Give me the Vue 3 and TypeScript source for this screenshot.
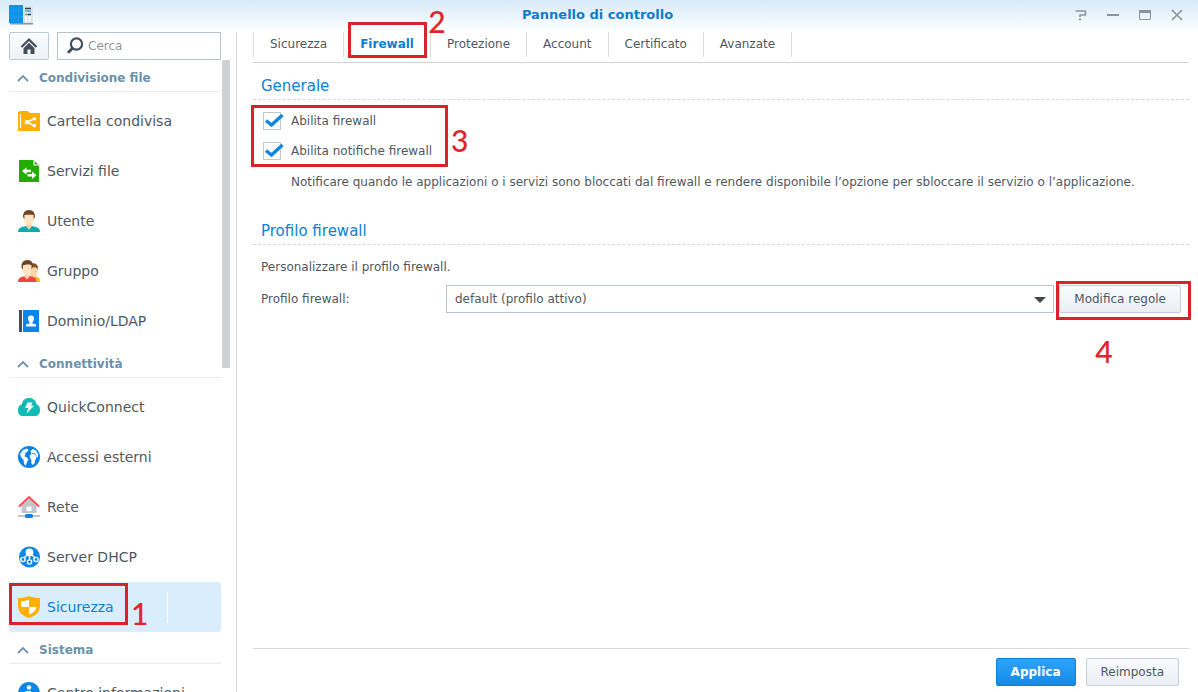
<script setup lang="ts">
import { ref } from 'vue'

interface Entry {
  id: string
  label: string
}
interface Group {
  title: string
  entries: Entry[]
}

const groups: Group[] = [
  {
    title: 'Condivisione file',
    entries: [
      { id: 'folder', label: 'Cartella condivisa' },
      { id: 'files', label: 'Servizi file' },
      { id: 'user', label: 'Utente' },
      { id: 'group', label: 'Gruppo' },
      { id: 'ldap', label: 'Dominio/LDAP' },
    ],
  },
  {
    title: 'Connettività',
    entries: [
      { id: 'quick', label: 'QuickConnect' },
      { id: 'globe', label: 'Accessi esterni' },
      { id: 'network', label: 'Rete' },
      { id: 'dhcp', label: 'Server DHCP' },
      { id: 'security', label: 'Sicurezza' },
    ],
  },
  {
    title: 'Sistema',
    entries: [{ id: 'info', label: 'Centro informazioni' }],
  },
]

const tabs: string[] = ['Sicurezza', 'Firewall', 'Protezione', 'Account', 'Certificato', 'Avanzate']

const activeEntry = ref('security')
const activeTab = ref('Firewall')
const search = ref('')
const firewallOn = ref(true)
const notifyOn = ref(true)
const profile = ref('default')
</script>

<template>
  <div class="window">
    <header class="titlebar">
      <svg class="app-icon" width="24" height="20" viewBox="0 0 24 20" aria-hidden="true">
        <path d="M1 18h23v1.500H1z" fill="#8b949b" />
        <path d="M13 1h11v17H13z" fill="#dce3e8" />
        <path d="M0 0h14v18H0z" fill="#0a93ea" />
        <path d="M4.500 0v18M9.500 0v18M0 6h14M0 12h14" stroke="#1a9bee" stroke-width="1" />
        <path d="M16 3.500h6M19 9.500h3" stroke="#38444e" stroke-width="1.500" />
        <path d="M19 6h3" stroke="#38a7e4" stroke-width="1.500" />
        <path d="M16 9.500h3M16 6h3" stroke="#5fb94a" stroke-width="1.500" />
        <path d="M16 12.500h2M19 12.500h3M16 15.500h2M19 15.500h3" stroke="#fff" stroke-width="2" />
      </svg>
      <h1>Pannello di controllo</h1>
      <div class="window-buttons">
        <button type="button" aria-label="Guida">
          <svg width="14" height="14" viewBox="0 0 14 14"><path d="M1.500 3H11.500V7H6V9" fill="none" stroke="#8895a1" stroke-width="1.600" stroke-linejoin="round" /><path d="M5 10.500h2v1.700H5z" fill="#8895a1" /></svg>
        </button>
        <button type="button" aria-label="Riduci a icona">
          <svg width="14" height="14" viewBox="0 0 14 14"><path d="M1 7h12" stroke="#8895a1" stroke-width="2" /></svg>
        </button>
        <button type="button" aria-label="Ingrandisci">
          <svg width="14" height="14" viewBox="0 0 14 14"><path d="M1.500 2.500h11v9h-11z" fill="none" stroke="#8895a1" /><path d="M1 2h12v3H1z" fill="#8895a1" /></svg>
        </button>
        <button type="button" aria-label="Chiudi">
          <svg width="14" height="14" viewBox="0 0 14 14"><path d="M2 2l10 10M12 2L2 12" stroke="#8895a1" stroke-width="1.700" /></svg>
        </button>
      </div>
    </header>

    <div class="body">
      <aside class="sidebar">
        <div class="tools">
          <button type="button" class="home" aria-label="Home">
            <svg width="18" height="18" viewBox="0 0 18 18">
              <path d="M1.500 10L9 2.500L16.500 10" fill="none" stroke="#454f59" stroke-width="2.200" />
              <path d="M9 5.800L14.500 11.200V17H10.500V12.500H7.500V17H3.500V11.200z" fill="#454f59" />
            </svg>
          </button>
          <div class="search">
            <svg width="18" height="18" viewBox="0 0 18 18" aria-hidden="true">
              <circle cx="10.500" cy="7" r="5.600" fill="none" stroke="#454f59" stroke-width="2.200" />
              <path d="M6.500 11.200L2 15.700" stroke="#454f59" stroke-width="3" />
            </svg>
            <input v-model="search" type="text" placeholder="Cerca" aria-label="Cerca" />
          </div>
        </div>

        <nav class="list">
          <section v-for="group in groups" :key="group.title">
            <h2>
              <svg width="12" height="8" viewBox="0 0 12 8" aria-hidden="true"><path d="M1 7l5-5 5 5" fill="none" stroke="#7394ab" stroke-width="1.800" /></svg>
              {{ group.title }}
            </h2>
            <ul>
              <li v-for="entry in group.entries" :key="entry.id">
                <a href="#" :class="{ active: entry.id === activeEntry }" @click.prevent="activeEntry = entry.id">
                  <svg class="icon" width="22" height="22" viewBox="0 0 22 22" aria-hidden="true">
                    <g v-if="entry.id === 'folder'">
                      <path d="M1 1h9l2 2h10v18H0V2h1z" fill="#ffb000" />
                      <path d="M2.500 4v14" stroke="#fff" stroke-width="1.200" />
                      <path d="M16.500 8.500L9 12.300l7.500 3.500" fill="none" stroke="#fff" stroke-width="1.500" />
                      <circle cx="9" cy="12.300" r="2.300" fill="#fff" />
                      <circle cx="16.500" cy="8.700" r="1.700" fill="#fff" />
                      <circle cx="16.500" cy="15.700" r="1.700" fill="#fff" />
                    </g>
                    <g v-else-if="entry.id === 'files'">
                      <path d="M1 0h14l6 5.500V22H1z" fill="#21ac00" />
                      <path d="M15.500 0v5.500H21z" fill="#fff" />
                      <path d="M16.700 1.200L20 4.400h-3.300z" fill="#21ac00" />
                      <path d="M4 11l4.500-3.800v2.600H13v2.400H8.500v2.600z" fill="#fff" />
                      <path d="M18.500 15.200L14 19v-2.600H9.500V14H14v-2.600z" fill="#fff" />
                    </g>
                    <g v-else-if="entry.id === 'user'">
                      <path d="M0 22c0-4 3-5 8-6h6c5 1 8 2 8 6z" fill="#0dabb0" />
                      <path d="M8.500 12h5v4.500L11 20l-2.500-3.500z" fill="#f8cfa6" />
                      <path d="M6 5h10v3c0 4-2 7-5 7s-5-3-5-7z" fill="#ffe3c3" />
                      <path d="M5.200 7.500C4.500 3 7 0 11 0s6.500 3 5.800 7.500L15.600 9V5C12 4.500 10 4.500 6.400 5v4z" fill="#714322" />
                    </g>
                    <g v-else-if="entry.id === 'group'">
                      <path d="M13 22c0-4 1-6 4-6 4 1 5 2.500 5 6z" fill="#f7bd20" />
                      <path d="M12 7h7.500v4c0 3-1.500 6-4 6H12z" fill="#ffd5a8" />
                      <path d="M12 4c4-2 8 0 8 3.500L19 11V8c-2-1-4-1-7-1z" fill="#8a512b" />
                      <path d="M0 22c0-4 2.500-5 7-6h5c4 1 6.500 2 6.500 6z" fill="#ef4348" />
                      <path d="M6.500 12h5v5L9 19.500 6.500 17z" fill="#f8cfa6" />
                      <path d="M4.500 5h9.500v4c0 4-2 6.500-4.700 6.500S4.500 13 4.500 9z" fill="#ffe3c3" />
                      <path d="M3.800 8C2.500 3 5.500 0 9.500 0s6.500 3 5 8l-1 1.500V5C10 4.300 8.500 4.500 5 5.300v4.200z" fill="#714322" />
                    </g>
                    <g v-else-if="entry.id === 'ldap'">
                      <path d="M1 0h3v22H1z" fill="#3d5064" />
                      <path d="M5 0h16v22H5z" fill="#0b86e8" />
                      <path d="M13 5.500c2 0 3 1.200 3 3 0 1.500-.6 2.700-1.500 3.500v1.500l3.500 1V16.500H8v-2l3.500-1V12c-.9-.8-1.500-2-1.500-3.500 0-1.800 1-3 3-3z" fill="#fff" />
                    </g>
                    <g v-else-if="entry.id === 'quick'">
                      <path d="M4 8.500C4 4.500 7 2 11 2c4 0 7 2.200 7 6C20.500 8.500 22 11 22 14c0 4-2 6-5 6H5c-3 0-5-2-5-5.500 0-3.500 1.500-6 4-6z" fill="#0fbcb6" />
                      <path d="M4.500 8.500c3-.8 4.500.5 5.500 2M18 8l-2 1" fill="none" stroke="#08a7a2" />
                      <path d="M9.500 6.500h5L13 9.800h3L8.700 17.500l1.500-5.500H7z" fill="#fff" />
                    </g>
                    <g v-else-if="entry.id === 'globe'">
                      <circle cx="11" cy="11" r="11" fill="#0b83e6" />
                      <path d="M2 8L5 4l4-1.500L10.500 4 9 6 7 7l.5 2L6 10l3 1.500 1.500 2L9 16l-1.500 4L6 17.500 5.500 14 3 11z" fill="#fff" />
                      <path d="M12.500 5L15 3l3 1.500L20 8v4l-1.500-2-.5 3-1 1.500-.5 3L14.500 19l-1.200-2v-3.500L12 12l-.3-2.500L13.500 8z" fill="#fff" />
                      <path d="M14 7.500l3 .3.800 1.700" fill="none" stroke="#0b83e6" stroke-width=".8" />
                    </g>
                    <g v-else-if="entry.id === 'network'">
                      <path d="M3.500 10L11 3l7.500 7v7h-15z" fill="#c0c6cb" />
                      <path d="M8.500 10.500h5V15h-5z" fill="#fff" />
                      <path d="M1 10.500L11 1.200l10 9.300" fill="none" stroke="#f05457" stroke-width="2.200" />
                      <path d="M0 20h22" stroke="#a9b0b6" stroke-width="1.500" />
                      <rect x="7" y="18" width="8" height="4" rx="1.500" fill="#0b83e6" />
                    </g>
                    <g v-else-if="entry.id === 'dhcp'">
                      <circle cx="11.500" cy="11" r="10.500" fill="#0b87e8" />
                      <path d="M11.500 6v9M9 9l-4 4M14 9l4 4" stroke="#fff" stroke-width="1.300" />
                      <circle cx="11.500" cy="6.500" r="3.900" fill="#fff" />
                      <g fill="#0b87e8" stroke="#fff" stroke-width="1.400">
                        <circle cx="5" cy="13.500" r="2.100" />
                        <circle cx="11.500" cy="16" r="2.100" />
                        <circle cx="18" cy="13.500" r="2.100" />
                      </g>
                    </g>
                    <g v-else-if="entry.id === 'security'">
                      <path d="M0 2C4 2 8 1.500 11 0c3 1.500 7 2 11 2v7c0 7-4 11-11 13C4 20 0 16 0 9z" fill="#ffb000" />
                      <path d="M11 3.500V11H3.500C3 9 3 7 3.200 5.200 6 5 9 4.500 11 3.500zM11 11h7.500c-1 4-3.500 6.200-7.500 7.500z" fill="#fff" />
                    </g>
                    <g v-else>
                      <circle cx="11" cy="11" r="11" fill="#0b87e8" />
                      <circle cx="11" cy="5.500" r="2.200" fill="#fff" />
                      <path d="M7.500 9H13v8h2v2H7.500v-2h2v-6h-2z" fill="#fff" />
                    </g>
                  </svg>
                  <span>{{ entry.label }}</span>
                  <i v-if="entry.id === 'security'" class="seam"></i>
                  <span v-if="entry.id === 'security'" class="mark mark-1"><b>1</b></span>
                </a>
              </li>
            </ul>
          </section>
        </nav>
        <div class="scrollbar"></div>
      </aside>

      <main class="content">
        <nav class="tabs">
          <div v-for="tab in tabs" :key="tab" class="tab">
            <button type="button" :class="{ current: tab === activeTab }" @click="activeTab = tab">{{ tab }}</button>
            <span v-if="tab === 'Firewall'" class="mark mark-2"><b>2</b></span>
          </div>
        </nav>

        <form class="panel" @submit.prevent>
          <h3>Generale</h3>
          <div class="checks">
            <label class="check">
              <span class="box">
                <input v-model="firewallOn" type="checkbox" />
                <svg v-if="firewallOn" width="20" height="16" viewBox="0 0 20 16" aria-hidden="true"><path d="M2 7.500l5.500 4.500L18.500 2" fill="none" stroke="#0f86e4" stroke-width="3.400" /></svg>
              </span>
              Abilita firewall
            </label>
            <label class="check">
              <span class="box">
                <input v-model="notifyOn" type="checkbox" />
                <svg v-if="notifyOn" width="20" height="16" viewBox="0 0 20 16" aria-hidden="true"><path d="M2 7.500l5.500 4.500L18.500 2" fill="none" stroke="#0f86e4" stroke-width="3.400" /></svg>
              </span>
              Abilita notifiche firewall
            </label>
            <span class="mark mark-3"><b>3</b></span>
          </div>
          <p class="hint">Notificare quando le applicazioni o i servizi sono bloccati dal firewall e rendere disponibile l’opzione per sbloccare il servizio o l’applicazione.</p>

          <h3>Profilo firewall</h3>
          <p class="intro">Personalizzare il profilo firewall.</p>
          <div class="field">
            <label for="profile">Profilo firewall:</label>
            <div class="select">
              <select id="profile" v-model="profile">
                <option value="default">default (profilo attivo)</option>
              </select>
              <svg width="12" height="6" viewBox="0 0 12 6" aria-hidden="true"><path d="M0 0h12L6 6z" fill="#3f474f" /></svg>
            </div>
            <div class="rules">
              <button type="button" class="btn">Modifica regole</button>
              <span class="mark mark-4"><b>4</b></span>
            </div>
          </div>
        </form>

        <footer class="footer">
          <button type="button" class="btn primary">Applica</button>
          <button type="button" class="btn">Reimposta</button>
        </footer>
      </main>
    </div>
  </div>
</template>

<style>
body {
  margin: 0;
  overflow: hidden;
}
</style>

<style scoped>
.window {
  display: flex;
  flex-direction: column;
  height: 100vh;
  overflow: hidden;
  background: linear-gradient(#d7eaf8, #fff 32px);
  color: #50585f;
  font: 12px/18px Verdana, "DejaVu Sans", sans-serif;
}
.window * {
  box-sizing: border-box;
}
button,
input,
select {
  color: inherit;
  font: inherit;
}
h1,
h2,
h3,
p,
ul {
  margin: 0;
  padding: 0;
  list-style: none;
}
.titlebar {
  display: grid;
  grid-template-columns: 1fr auto 1fr;
  align-items: center;
  flex: none;
  height: 32px;
  padding: 0 12px 2px 9px;
}
h1 {
  color: #0c7dcb;
  font-size: 13px;
}
.window-buttons {
  display: flex;
  justify-content: flex-end;
  gap: 14px;
}
.window-buttons button {
  width: 18px;
  height: 18px;
  padding: 2px;
  border: 0;
  background: none;
}
.window-buttons svg {
  display: block;
}
.body {
  display: flex;
  flex: 1;
  min-height: 0;
}
.sidebar {
  position: relative;
  display: flex;
  flex: none;
  flex-direction: column;
  width: 237px;
  padding: 0 15px 0 9px;
  border-right: 1px solid #d3d7da;
}
.tools {
  display: flex;
  flex: none;
  gap: 8px;
  width: 212px;
}
.home {
  display: flex;
  flex: none;
  align-items: center;
  justify-content: center;
  width: 40px;
  height: 28px;
  padding: 0;
  border: 1px solid #bec8d2;
  border-radius: 2px;
  background: linear-gradient(#fafcfe, #eef3f8);
}
.search {
  display: flex;
  flex: 1;
  align-items: center;
  gap: 4px;
  min-width: 0;
  height: 28px;
  padding-left: 8px;
  border: 1px solid #bac2ca;
  background: #fff;
}
.search svg {
  flex: none;
}
.search input {
  flex: 1;
  min-width: 0;
  padding: 0;
  border: 0;
  outline: 0;
  background: none;
}
.search input::placeholder {
  color: #92989d;
}
.list {
  flex: 1;
  min-height: 0;
  overflow: hidden;
}
h2 {
  display: flex;
  align-items: center;
  gap: 10px;
  height: 32px;
  margin-bottom: 4px;
  padding: 4px 0 0 8px;
  border-bottom: 1px solid #e8ebed;
  color: #6a91ab;
  font-size: 12px;
}
.list a {
  position: relative;
  display: flex;
  align-items: center;
  gap: 7px;
  width: 212px;
  height: 50px;
  padding-left: 9px;
  border-radius: 3px;
  color: #50585f;
  font-size: 14px;
  text-decoration: none;
}
.list a.active {
  background: #d9edfd;
  color: #0c80d4;
}
.icon {
  flex: none;
}
.seam {
  position: absolute;
  top: 10px;
  left: 158px;
  width: 1px;
  height: 31px;
  background: #fff;
}
.scrollbar {
  position: absolute;
  top: 28px;
  right: 6px;
  width: 8px;
  height: 308px;
  background: #d0d1d3;
}
.content {
  display: flex;
  flex: 1;
  flex-direction: column;
  min-width: 0;
  padding: 0 9px 0 16px;
}
.tabs {
  display: flex;
  flex: none;
  height: 31px;
  border-bottom: 1px solid #d0d4d7;
}
.tab {
  position: relative;
  height: 25px;
  border-right: 1px solid #d9dcdf;
}
.tab:first-child {
  border-left: 1px solid #d9dcdf;
}
.tab button {
  height: 24px;
  padding: 0 16px;
  border: 0;
  background: none;
}
.tab .current {
  color: #0c80d4;
  font-weight: bold;
}
.panel {
  flex: 1;
  min-height: 0;
}
h3 {
  height: 37px;
  padding: 14px 8px 0;
  border-bottom: 1px dashed #d4d8db;
  color: #0c80d4;
  font-size: 15px;
  font-weight: normal;
}
.checks {
  position: relative;
  display: flex;
  flex-direction: column;
  gap: 10px;
  align-items: flex-start;
  margin-top: 11px;
  padding-left: 10px;
}
.check {
  display: flex;
  align-items: center;
  gap: 10px;
  height: 20px;
}
.box {
  position: relative;
  display: flex;
}
.box input {
  width: 18px;
  height: 18px;
  margin: 0;
  border: 1px solid #bfc8d1;
  background: #fff;
  appearance: none;
}
.box svg {
  position: absolute;
  top: 1px;
  left: 1px;
  pointer-events: none;
}
.hint {
  margin: 12px 0 17px;
  padding-left: 38px;
}
.intro {
  margin-top: 13px;
  padding-left: 8px;
}
.field {
  display: flex;
  align-items: center;
  margin-top: 9px;
  padding: 0 8px;
}
.field label {
  flex: none;
  width: 185px;
}
.select {
  position: relative;
  flex: 1;
  margin-right: 5px;
}
.select select {
  display: block;
  width: 100%;
  height: 28px;
  padding: 0 24px 0 8px;
  border: 1px solid #bac2ca;
  border-radius: 0;
  background: #fff;
  appearance: none;
}
.select svg {
  position: absolute;
  top: 12px;
  right: 8px;
  pointer-events: none;
}
.rules {
  position: relative;
}
.btn {
  display: block;
  height: 28px;
  padding: 0 14px;
  border: 1px solid #c5ced6;
  border-radius: 2px;
  background: linear-gradient(#f9fbfd, #eaeff5);
}
.btn.primary {
  border-color: #0b7fd8;
  background: linear-gradient(#2fa3f9, #138be9);
  color: #fff;
  font-weight: bold;
}
.footer {
  display: flex;
  flex: none;
  justify-content: flex-end;
  gap: 10px;
  padding: 9px 10px 6px;
  border-top: 1px solid #d7dadc;
}
.mark {
  position: absolute;
  border: 3px solid #d9232a;
  pointer-events: none;
}
.mark b {
  position: absolute;
  color: #e0242b;
  font: 500 30px/30px Lato, sans-serif;
}
.mark-1 {
  top: 1px;
  left: 0;
  width: 119px;
  height: 42px;
}
.mark-1 b {
  top: 12px;
  left: 119px;
}
.mark-2 {
  top: -10px;
  left: 4px;
  width: 79px;
  height: 36px;
}
.mark-2 b {
  top: -19px;
  left: 77px;
}
.mark-3 {
  top: -6px;
  left: -2px;
  width: 197px;
  height: 62px;
}
.mark-3 b {
  top: 17px;
  left: 197px;
}
.mark-4 {
  top: -4px;
  left: -3px;
  width: 135px;
  height: 39px;
}
.mark-4 b {
  top: 52px;
  left: 36px;
}
</style>
